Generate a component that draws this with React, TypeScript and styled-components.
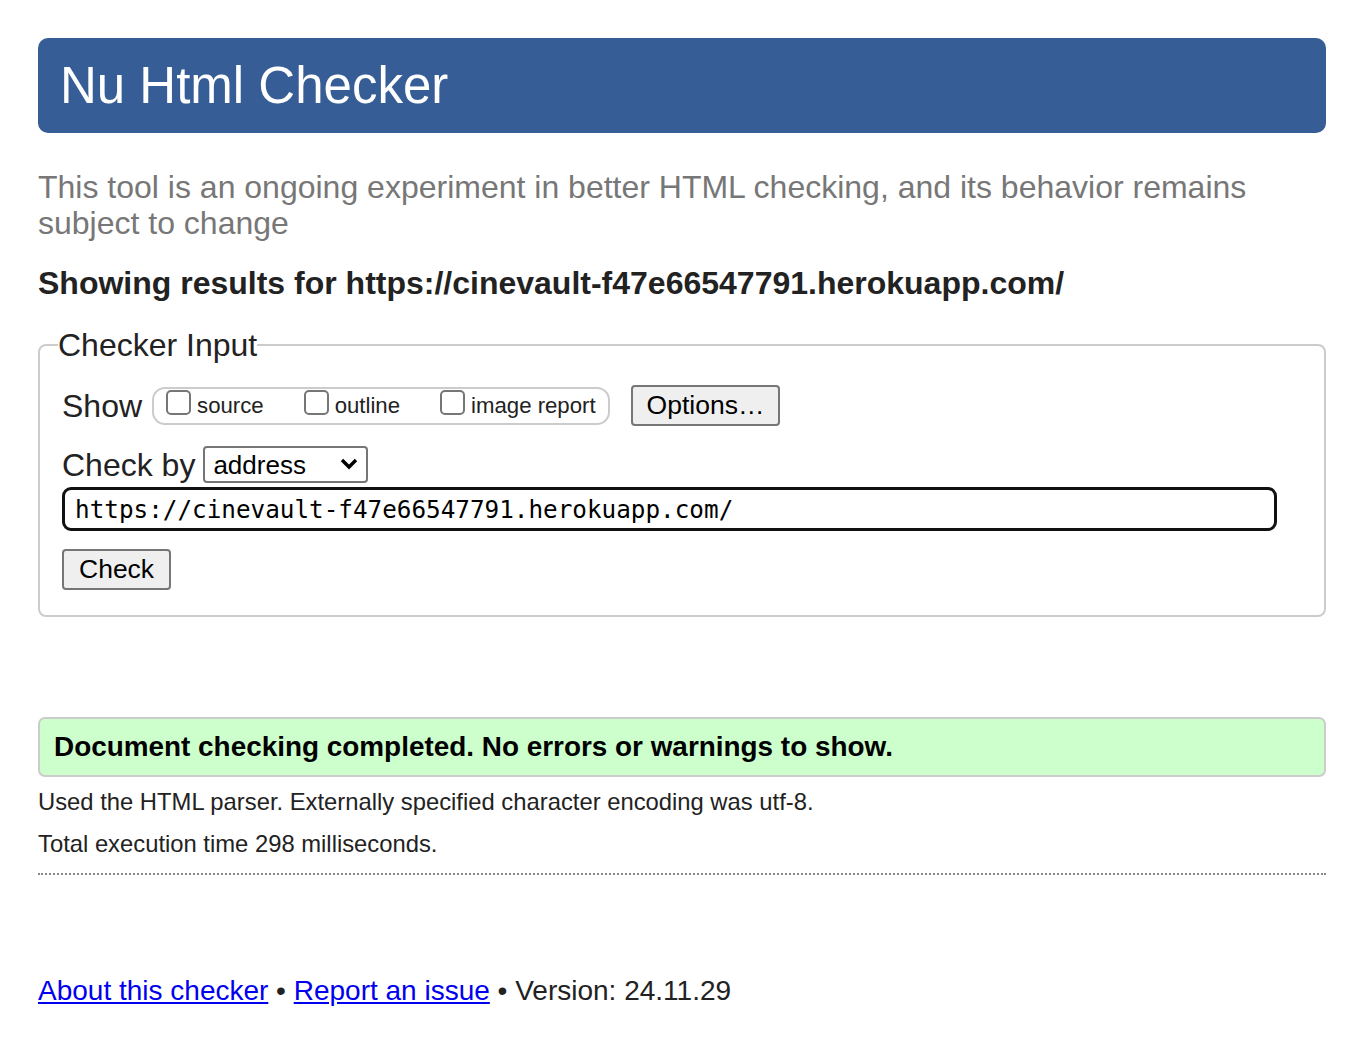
import React from "react";
import styled, { createGlobalStyle } from "styled-components";

const Global = createGlobalStyle`
  html, body { margin: 0; padding: 0; background: #fff; }
  body { font-family: "Liberation Sans", Arial, sans-serif; color: #222; }
`;

const Page = styled.div`
  padding: 38px 26px 30px 38px;
`;

const Header = styled.h1`
  margin: 0;
  background: #365d95;
  color: #fff;
  border-radius: 10px;
  font-weight: normal;
  font-size: 51px;
  line-height: 95px;
  padding: 0 22px;
`;

const Intro = styled.p`
  margin: 36px 0 0;
  color: #777;
  font-size: 32px;
  line-height: 36px;
`;

const Results = styled.h2`
  margin: 24px 0 0;
  font-size: 32px;
  line-height: 36px;
  font-weight: bold;
  color: #222;
`;

const Fieldset = styled.fieldset`
  margin: 26px 0 0;
  border: 2px solid #ccc;
  border-radius: 8px;
  padding: 22px 22px 25px;
`;

const Legend = styled.legend`
  font-size: 32px;
  line-height: 36px;
  padding: 0;
  margin-left: -4px;
  color: #222;
`;

const Row = styled.div<{ $mt?: number }>`
  display: flex;
  align-items: center;
  gap: 10px;
  margin-top: ${(p) => p.$mt ?? 0}px;
`;

const Label = styled.span`
  font-size: 32px;
  line-height: 36px;
`;

const Group = styled.div`
  display: flex;
  align-items: center;
  border: 2px solid #ccc;
  border-radius: 13px;
  padding: 0 12px 0 12px;
  height: 34px;
  gap: 40px;
  margin-right: 11px;
`;

const CheckLabel = styled.label`
  display: flex;
  align-items: center;
  gap: 6px;
  font-size: 22.2px;
`;

const Box = styled.input`
  appearance: none;
  margin: 0 0 6px 0;
  width: 25px;
  height: 25px;
  border: 2px solid #767676;
  border-radius: 5px;
  background: #fff;
  box-sizing: border-box;
`;

const Button = styled.button`
  font-family: "Liberation Sans", Arial, sans-serif;
  font-size: 26.5px;
  color: #000;
  background: #efefef;
  border: 2px solid #767676;
  border-radius: 4px;
  height: 41px;
  padding: 0 14px;
  line-height: 37px;
`;

const SelectWrap = styled.div`
  position: relative;
  width: 165px;
  height: 37px;
  margin-left: -2px;
`;

const Select = styled.select`
  appearance: none;
  width: 100%;
  height: 100%;
  font-family: "Liberation Sans", Arial, sans-serif;
  font-size: 26px;
  color: #000;
  background: #fff;
  border: 2px solid #767676;
  border-radius: 4px;
  padding: 0 8px;
  box-sizing: border-box;
`;

const Chevron = styled.svg`
  position: absolute;
  right: 10px;
  top: 11px;
  pointer-events: none;
`;

const UrlInput = styled.input`
  display: block;
  margin-top: 4px;
  width: 98%;
  height: 44px;
  box-sizing: border-box;
  border: 3px solid #111;
  border-radius: 9px;
  padding: 0 10px;
  font-family: "DejaVu Sans Mono", monospace;
  font-size: 24.3px;
  color: #000;
  outline: none;
`;

const CheckButton = styled(Button)`
  display: block;
  margin-top: 18px;
  padding: 0 15px;
`;

const Success = styled.div`
  margin-top: 100px;
  background: #ccffcc;
  border: 2px solid #ccc;
  border-radius: 7px;
  padding: 0 14px;
  height: 60px;
  box-sizing: border-box;
  display: flex;
  align-items: center;
  font-weight: bold;
  font-size: 27.9px;
  color: #000;
`;

const Info = styled.p<{ $mt: number }>`
  margin: ${(p) => p.$mt}px 0 0;
  font-size: 23.8px;
  line-height: 27px;
  color: #222;
`;

const Rule = styled.hr`
  margin: 16px 0 0;
  border: 0;
  border-top: 2px dotted #888;
  height: 0;
`;

const Footer = styled.p`
  margin: 100px 0 0;
  font-size: 28px;
  line-height: 32px;
  color: #222;
  a { color: #0000ee; text-decoration: underline; }
`;

export default function App() {
  return (
    <>
      <Global />
      <Page>
        <Header>Nu Html Checker</Header>
        <Intro>
          This tool is an ongoing experiment in better HTML checking, and its behavior remains subject to change
        </Intro>
        <Results>Showing results for https://cinevault-f47e66547791.herokuapp.com/</Results>
        <Fieldset>
          <Legend>Checker Input</Legend>
          <Row>
            <Label>Show</Label>
            <Group>
              <CheckLabel><Box type="checkbox" />source</CheckLabel>
              <CheckLabel><Box type="checkbox" />outline</CheckLabel>
              <CheckLabel><Box type="checkbox" />image report</CheckLabel>
            </Group>
            <Button>Options…</Button>
          </Row>
          <Row $mt={20}>
            <Label>Check by</Label>
            <SelectWrap>
              <Select defaultValue="address">
                <option value="address">address</option>
                <option value="file">file upload</option>
                <option value="text">text input</option>
              </Select>
              <Chevron width="18" height="14" viewBox="0 0 18 14">
                <path d="M2 3 L9 10 L16 3" fill="none" stroke="#000" strokeWidth="3.4" />
              </Chevron>
            </SelectWrap>
          </Row>
          <UrlInput defaultValue="https://cinevault-f47e66547791.herokuapp.com/" />
          <CheckButton>Check</CheckButton>
        </Fieldset>
        <Success>Document checking completed. No errors or warnings to show.</Success>
        <Info $mt={11}>Used the HTML parser. Externally specified character encoding was utf-8.</Info>
        <Info $mt={15}>Total execution time 298 milliseconds.</Info>
        <Rule />
        <Footer>
          <a href="#">About this checker</a> • <a href="#">Report an issue</a> • Version: 24.11.29
        </Footer>
      </Page>
    </>
  );
}
